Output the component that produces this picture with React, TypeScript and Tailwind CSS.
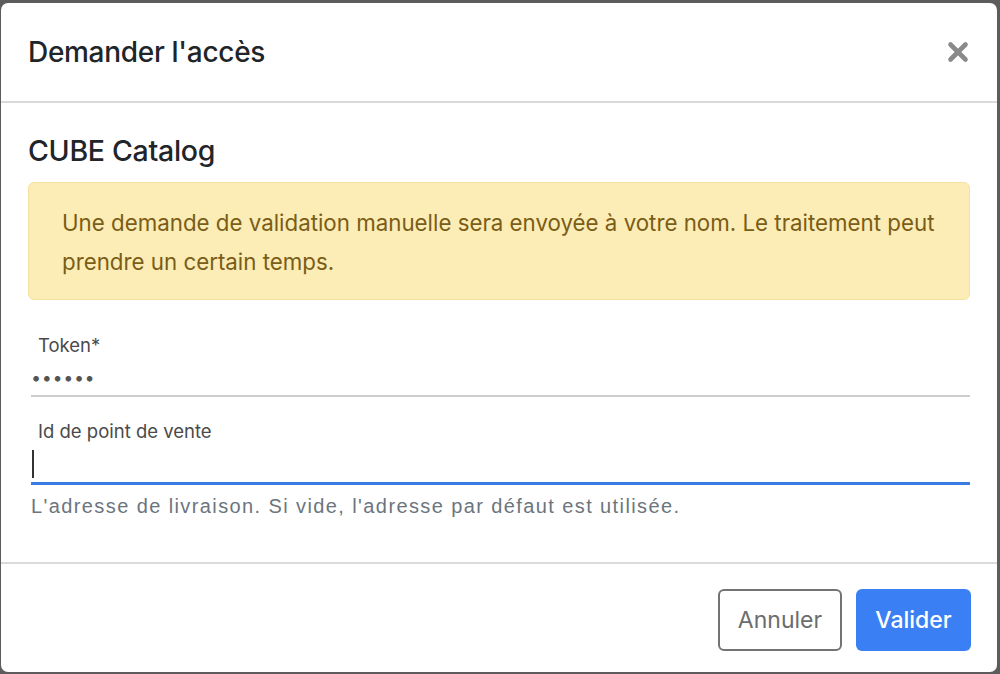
import React from "react";

const sans = "font-['Inter','Noto_Sans',sans-serif]";

export default function App() {
  return (
    <div className={`h-[674px] w-[1000px] overflow-hidden bg-[#5c5c5c] pt-[3px] pl-[1px] pr-[3px] pb-[2px] ${sans}`}>
      <div className="flex h-full flex-col rounded-[7px] bg-white">
        {/* Header */}
        <div className="flex h-[100px] shrink-0 items-center justify-between border-b-2 border-[#dadada] pl-[27px] pr-[28px]">
          <h2 className="text-[28px] font-medium tracking-[-0.3px] text-[#212529]">Demander l'accès</h2>
          <button className="text-[#8a8a8a]" aria-label="Fermer">
            <svg width="22" height="22" viewBox="0 0 22 22">
              <path d="M3.5 3.5 L18.5 18.5 M18.5 3.5 L3.5 18.5" stroke="currentColor" strokeWidth="4.6" strokeLinecap="round" />
            </svg>
          </button>
        </div>

        {/* Body */}
        <div className="flex-1 px-[27px] pt-[31px]">
          <h3 className="text-[28.5px] leading-[34px] font-medium tracking-[-0.3px] text-[#212529]">CUBE Catalog</h3>
          <div className="mt-[14px] rounded-[6px] border border-[#f7e1a0] bg-[#fcecb6] pt-[20px] pb-[18px] pl-[33px] pr-[20px] text-[22.3px] leading-[39px] text-[#7a5d17]">
            Une demande de validation manuelle sera envoyée à votre nom. Le traitement peut prendre un certain temps.
          </div>

          {/* Token */}
          <div className="mt-[34px] pl-[3px]">
            <label className="block pl-[7px] text-[18.5px] leading-[22px] text-[#4a4a4a]">Token*</label>
            <div className="flex h-[41px] items-center border-b-2 border-[#cdcdcd] pt-[4px]">
              <span className="text-[18px] tracking-[0.6px] text-[#555]">••••••</span>
            </div>
          </div>

          {/* Point de vente */}
          <div className="mt-[23px] pl-[3px]">
            <label className="block pl-[7px] text-[18.5px] leading-[22px] text-[#4a4a4a]">Id de point de vente</label>
            <div className="flex h-[43px] items-center border-b-[3px] border-[#3b7de2] pl-[1px] pt-[4px]">
              <span className="block h-[28px] w-[2px] bg-[#333]" />
            </div>
            <p className="mt-[9px] font-['Liberation_Sans',Arial,sans-serif] text-[20px] leading-[24px] tracking-[1.4px] text-[#6c757d]">
              L'adresse de livraison. Si vide, l'adresse par défaut est utilisée.
            </p>
          </div>
        </div>

        {/* Footer */}
        <div className="flex h-[110px] shrink-0 items-start justify-end gap-[14px] border-t-2 border-[#dadada] pt-[25px] pr-[26px]">
          <button className="h-[62px] w-[124px] rounded-[6px] border-2 border-[#737373] text-[23px] text-[#6c6c6c]">Annuler</button>
          <button className="h-[62px] w-[115px] rounded-[6px] bg-[#3a7ff4] text-[23px] font-medium text-white">Valider</button>
        </div>
      </div>
    </div>
  );
}
